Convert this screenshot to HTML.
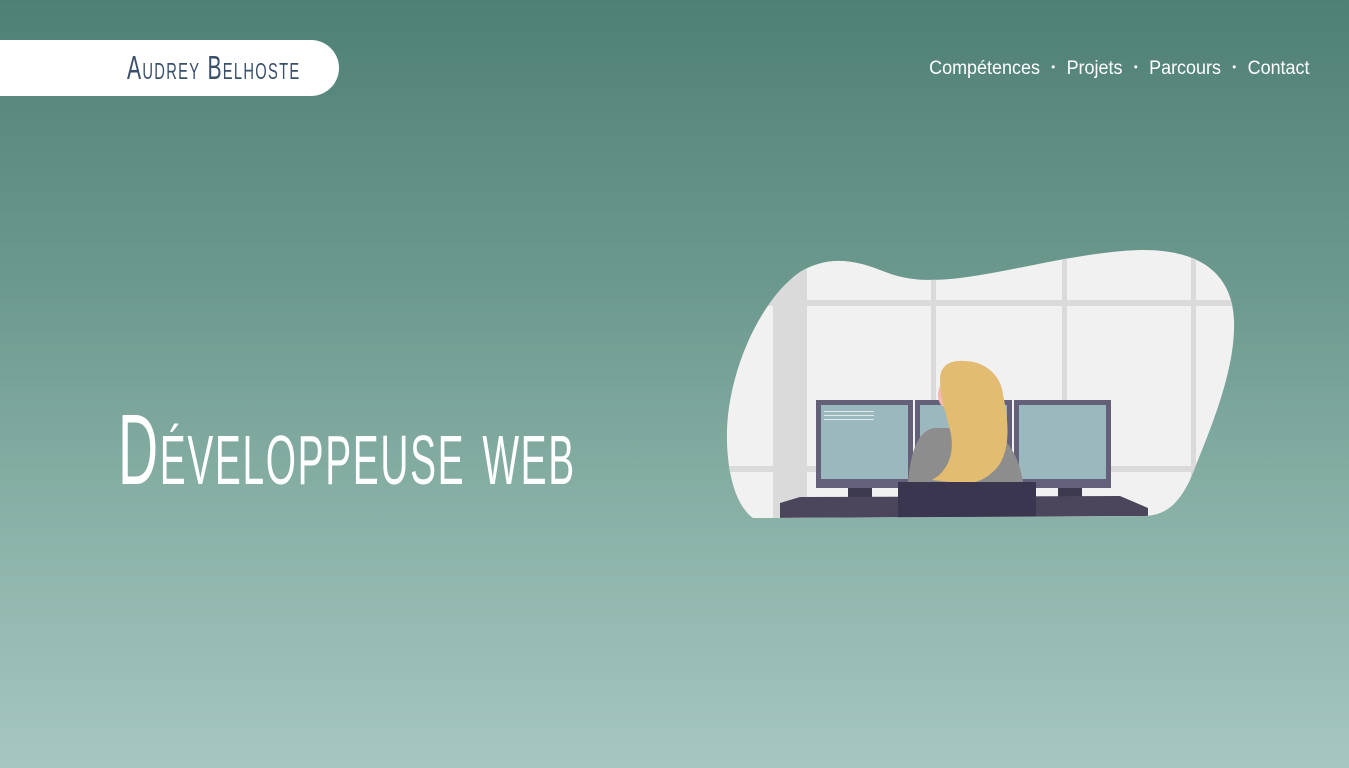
<!DOCTYPE html>
<html><head><meta charset="utf-8"><style>
html,body{margin:0;padding:0}
body{width:1349px;height:768px;overflow:hidden;position:relative;background:linear-gradient(180deg,#4f8075 0%,#6e9b90 40%,#8cb3a9 70%,#a5c7c0 100%);font-family:"Liberation Sans",sans-serif}
.logo{position:absolute;left:0;top:40px;width:339px;height:56px;background:#fff;border-radius:0 28px 28px 0}
.logo span{position:absolute;left:127px;top:10px;font-size:33px;color:#3a4f6a;font-variant:small-caps;transform:scaleX(.64);transform-origin:left;letter-spacing:2px;white-space:nowrap;line-height:36px}
nav{position:absolute;right:40px;top:58px;color:#fff;font-size:19px;white-space:nowrap;transform:scaleX(.945);transform-origin:right}
nav b{font-weight:normal;margin:0 12px;font-size:12px;vertical-align:3px}
h1{position:absolute;left:118px;top:395px;margin:0;color:#fff;font-weight:normal;font-size:100px;font-variant:small-caps;transform:scaleX(.555);transform-origin:left;white-space:nowrap;line-height:110px;letter-spacing:3px}
svg{position:absolute;left:0;top:0}
</style></head><body>
<div class="logo"><span>Audrey Belhoste</span></div>
<nav>Compétences<b>•</b>Projets<b>•</b>Parcours<b>•</b>Contact</nav>
<h1>Développeuse web</h1>
<svg width="1349" height="768">
<defs><clipPath id="c"><path d="M753 518 C735 505 726 470 727 430 C729 370 760 300 800 272 C825 257 850 258 880 270 C905 280 925 282 960 278 C1020 270 1080 252 1140 250 C1195 249 1232 270 1234 320 C1236 370 1210 430 1190 480 C1178 505 1165 515 1145 516 Z"/></clipPath></defs>
<g clip-path="url(#c)">
<rect x="700" y="240" width="560" height="290" fill="#f1f1f1"/>
<rect x="773" y="240" width="34" height="290" fill="#dadada"/>
<rect x="700" y="300" width="560" height="6" fill="#dadada"/>
<rect x="700" y="466" width="560" height="6" fill="#dadada"/>
<rect x="931" y="240" width="5" height="290" fill="#dadada"/>
<rect x="1062" y="240" width="5" height="290" fill="#dadada"/>
<rect x="1191" y="240" width="5" height="290" fill="#dadada"/>
<rect x="848" y="485" width="24" height="14" fill="#3d394f"/>
<rect x="1058" y="485" width="24" height="14" fill="#3d394f"/>
<rect x="816" y="400" width="97" height="88" fill="#65607a"/>
<rect x="821" y="405" width="87" height="74" fill="#9bb8bf"/>
<rect x="915" y="400" width="97" height="88" fill="#65607a"/>
<rect x="920" y="405" width="87" height="74" fill="#9bb8bf"/>
<rect x="1014" y="400" width="97" height="88" fill="#65607a"/>
<rect x="1019" y="405" width="87" height="74" fill="#9bb8bf"/>
<rect x="824" y="411" width="50" height="1" fill="#dfe8ea"/><rect x="824" y="415" width="50" height="1" fill="#dfe8ea"/><rect x="824" y="419" width="50" height="1" fill="#dfe8ea"/>
<path d="M780 503 L800 497 L1120 496 L1148 508 L1148 516 L780 518 Z" fill="#4b465c"/>
<path d="M908 483 C910 460 915 430 935 428 L990 428 C1010 440 1020 460 1023 483 Z" fill="#8d8d8d"/>
<ellipse cx="945" cy="395" rx="7" ry="12" fill="#f4b8b0"/>
<path d="M940 380 C940 365 950 360 965 361 C990 362 1002 380 1003 395 C1010 425 1010 455 995 470 C985 480 975 483 965 484 L932 480 C950 470 955 450 950 430 C945 410 940 395 940 380 Z" fill="#e2bc70"/>
<rect x="898" y="482" width="138" height="36" fill="#3a3650"/>
</g>
</svg>
</body></html>
